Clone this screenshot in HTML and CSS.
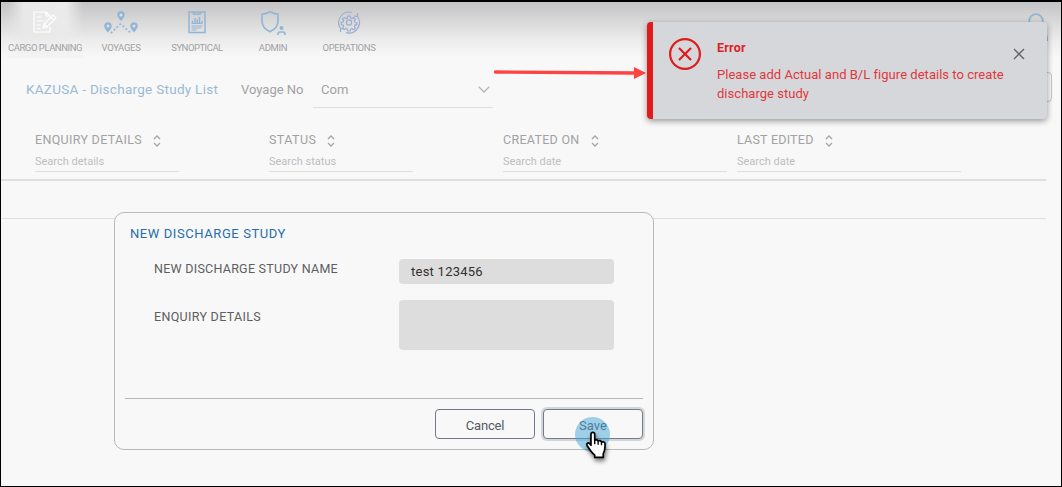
FILE: index.html
```html
<!DOCTYPE html>
<html lang="en">
<head>
<meta charset="utf-8">
<title>Discharge Study List</title>
<link rel="stylesheet" href="styles.css">
</head>
<body>
<div class="window">
  <header class="topbar">
    <nav class="nav">
      <a class="nav-item active">
        <svg class="nav-icon" width="26" height="24" viewBox="0 0 26 24"><path d="M18 8V5l-4-4H2v20h16v-5M14 1v4h4M4.500 6h5M4.500 10h7M4.500 14h4M4.500 17.500h4"/><path d="M11 17l1-4 9-9 3 3-9 9-4 1zM19 6l3 3M12 13l3 3"/></svg>
        <span class="nav-label t-cargo">CARGO PLANNING</span>
      </a>
      <a class="nav-item">
        <svg class="nav-icon voyages" width="36" height="24" viewBox="0 0 36 24"><path class="pin" d="M18 10C15 6.500 14.300 5 14.300 3.700a3.700 3.700 0 0 1 7.400 0C21.700 5 21 6.500 18 10zM5 21.500C2 18 1.300 16.500 1.300 15a3.700 3.700 0 0 1 7.400 0c0 1.500-.7 3-3.700 6.500zM31 21.500c-3-3.500-3.700-5-3.700-6.500a3.700 3.700 0 0 1 7.400 0c0 1.500-.7 3-3.700 6.500z"/><path class="dots" d="M8.500 21.500l9-8.500 10 8.500"/><circle class="hole" cx="18" cy="4" r="1.500"/><circle class="hole" cx="5" cy="15" r="1.500"/><circle class="hole" cx="31" cy="15" r="1.500"/></svg>
        <span class="nav-label t-voy">VOYAGES</span>
      </a>
      <a class="nav-item">
        <svg class="nav-icon" width="20" height="24" viewBox="0 0 20 24"><path class="frame" d="M2 1h16v20.500H2zM6.500 1v2h7V1"/><path class="bars" d="M5.500 12V9.500M8 12V7M10.200 12V8.500M12.500 12V6M15 12v-2"/><path d="M4.500 12.500h11M4.500 15h11M4.500 17h10M4.500 19h5"/></svg>
        <span class="nav-label t-syn">SYNOPTICAL</span>
      </a>
      <a class="nav-item">
        <svg class="nav-icon" width="26" height="24" viewBox="0 0 26 24"><path class="bold" d="M10 .8c3 1.600 5.500 2.200 8 2.400V10c0 5-3 8.300-8 10.700C5 18.300 2 15 2 10V3.200C4.500 3 7 2.400 10 .8z"/><circle class="pin" cx="21.500" cy="17" r="2"/><path class="bold" d="M18 24v-1a2 2 0 0 1 2-2h3a2 2 0 0 1 2 2v1"/></svg>
        <span class="nav-label t-adm">ADMIN</span>
      </a>
      <a class="nav-item">
        <svg class="nav-icon ops" width="24" height="24" viewBox="0 0 24 24"><circle cx="12" cy="11.500" r="2.600"/><path d="M10.800 5h2.400l.4 1.900 1.400.7 1.700-1 1.700 1.700-1 1.700.5 1.300 2 .4v2l-2 .4-.6 1.300 1.100 1.700-1.700 1.600-1.700-1-1.300.5-.5 1.800h-2.400l-.4-1.900-1.400-.6-1.700 1.100-1.700-1.700 1.100-1.600-.6-1.400-1.900-.4v-2.200l1.900-.4.6-1.300-1.100-1.700L7.300 6.600l1.700 1 1.300-.6z"/><path d="M3.500 17.500A10.500 10.500 0 0 1 15 1.500M20.500 5.500A10.500 10.500 0 0 1 9 21.600M17 5l3.500.5V2M7 18l-3.500-.5V21"/></svg>
        <span class="nav-label t-ops">OPERATIONS</span>
      </a>
    </nav>
    <svg class="user" width="24" height="28" viewBox="0 0 24 28"><circle cx="12" cy="8" r="6.800"/><path d="M2 28v-3a6 6 0 0 1 6-6h9a6 6 0 0 1 6 6v3"/></svg>
  </header>

  <section class="filters">
    <h1 class="page-title">KAZUSA - Discharge Study List</h1>
    <span class="field-label">Voyage No</span>
    <div class="select"><span class="select-value">Com</span><svg width="12" height="7" viewBox="0 0 12 7"><path d="M.8.800 6 6 11.200.8"/></svg></div>
    <span class="outline-button"></span>
  </section>

  <section class="table">
    <div class="thead">
      <div class="col"><div class="col-title"><span class="t-enq">ENQUIRY DETAILS</span><svg class="sort" width="8" height="12" viewBox="0 0 8 12"><path d="M1 4l3-3 3 3M1 8l3 3 3-3"/></svg></div><div class="search">Search details</div></div>
      <div class="col"><div class="col-title"><span class="t-sta">STATUS</span><svg class="sort" width="8" height="12" viewBox="0 0 8 12"><path d="M1 4l3-3 3 3M1 8l3 3 3-3"/></svg></div><div class="search">Search status</div></div>
      <div class="col"><div class="col-title"><span class="t-cre">CREATED ON</span><svg class="sort" width="8" height="12" viewBox="0 0 8 12"><path d="M1 4l3-3 3 3M1 8l3 3 3-3"/></svg></div><div class="search wide">Search date</div></div>
      <div class="col"><div class="col-title"><span class="t-las">LAST EDITED</span><svg class="sort" width="8" height="12" viewBox="0 0 8 12"><path d="M1 4l3-3 3 3M1 8l3 3 3-3"/></svg></div><div class="search wide">Search date</div></div>
    </div>
    <div class="empty-row"></div>
  </section>

  <div class="dialog">
    <h2 class="dialog-title">NEW DISCHARGE STUDY</h2>
    <div class="form">
      <label class="form-label t-name">NEW DISCHARGE STUDY NAME</label>
      <div class="input">test 123456</div>
      <label class="form-label t-det">ENQUIRY DETAILS</label>
      <div class="textarea"></div>
    </div>
    <div class="actions">
      <button class="btn t-can">Cancel</button>
      <button class="btn focused">Save</button>
    </div>
  </div>

  <svg class="arrow" width="158" height="14" viewBox="0 0 158 14"><path class="shaft" d="M3.500 6 143 7"/><path class="head" d="M142 1l12 6-12 6z"/></svg>

  <aside class="toast">
    <svg class="toast-icon" width="32" height="32" viewBox="0 0 32 32"><circle cx="16" cy="16" r="14.900"/><path d="M10 10l12 12M22 10L10 22"/></svg>
    <div class="toast-body">
      <div class="toast-title">Error</div>
      <div class="toast-text">Please add Actual and B/L figure details to create<br>discharge study</div>
    </div>
    <svg class="close" width="12" height="12" viewBox="0 0 12 12"><path d="M1 1l10 10M11 1L1 11"/></svg>
  </aside>

  <div class="click-spot"></div>
  <svg class="hand" width="27" height="33" viewBox="0 0 30 36"><path d="M5.500 3.500c0-3 4-3 4.200 0V10c1-1 3.300-.8 3.800.8 1.400-1 3.300-.5 3.700 1.200 1.800-.8 4 0 4 2.400 0 4.500-.2 7.600-2 10.400V29h-9.500v-2.500C6.500 24 4.500 21 1.200 15.700 0 13 2.800 12 4 13.600l1.500 2z"/><path class="lines" d="M9.700 10v4.500M13.500 11v4M17.200 12v3.500"/></svg>
</div>
</body>
</html>
```
FILE: styles.css
```css
* { box-sizing: border-box; }
body { margin: 0; font-family: Roboto, "Open Sans", sans-serif; font-size: 13px; color: #a2a2a4; }
h1, h2 { margin: 0; font-weight: 400; }
svg { display: block; fill: none; }
.window { position: relative; width: 1062px; height: 487px; overflow: hidden; background: #f8f8f8; border: 1px solid #000; border-top-width: 2px; }

/* Top navigation */
.topbar { display: flex; justify-content: space-between; height: 56px; padding: 0 13px 0 6px; background: linear-gradient(#c3c3c5, #d9d9da 35%, #ededed 70%, #f8f8f8); }
.nav { display: flex; }
.nav-item { display: flex; flex-direction: column; align-items: center; width: 76px; padding-top: 9px; }
.nav-item.active { background: linear-gradient(transparent 60%, #f4f4f4), linear-gradient(90deg, transparent 0, #e8e8e8 22%, #eaeaea 78%, transparent); }
.nav-icon { height: 24px; stroke: #91b5d4; stroke-width: 1.200; }
.active .nav-icon { stroke: #fff; stroke-width: 1.200; }
.nav-icon .pin { fill: #91b5d4; stroke: none; }
.nav-icon .hole { fill: #e0e0e0; stroke: none; }
.nav-icon .dots { stroke-width: 2; stroke-linecap: round; stroke-dasharray: .1 3.900; }
.nav-icon .bars { stroke-width: 1.500; }
.nav-icon .frame { stroke-width: 1.500; }
.nav-icon .bold { stroke-width: 1.600; }
.nav-icon.ops { stroke: #9aaed0; }
.nav-label { margin-top: 7px; font-size: 9.500px; line-height: 12px; white-space: nowrap; }
.t-cargo { letter-spacing: -.46px; }
.t-voy { letter-spacing: -.33px; }
.t-syn { letter-spacing: -.49px; }
.t-adm, .t-ops { letter-spacing: -.36px; }
.user { margin-top: 11px; stroke: #91b5d4; stroke-width: 1.800; }

/* Filter row */
.filters { display: flex; align-items: center; height: 50px; padding: 9px 9px 0 25px; }
.page-title { width: 214px; margin-top: 3px; font-size: 13.500px; letter-spacing: .28px; color: #9abad4; white-space: nowrap; }
.field-label { width: 73px; margin-top: 3px; padding-left: 1px; white-space: nowrap; }
.select { display: flex; align-items: center; justify-content: space-between; width: 180px; height: 36px; margin-top: 4px; padding: 0 3px 0 8px; border-bottom: 1px solid #dedede; }
.select svg { stroke: #b6b6b8; stroke-width: 1.300; }
.outline-button { width: 60px; height: 30px; margin: -2px 0 0 auto; border: 1px solid #c5c5c5; border-radius: 4px; }

/* Study table */
.table { width: 1045px; }
.thead { display: grid; grid-template-columns: 234px 234px 234px 1fr; height: 73px; padding: 22px 0 0 34px; border-bottom: 2px solid #dfdfdf; }
.col-title { display: flex; align-items: center; gap: 11px; height: 18px; font-size: 12.500px; }
.t-enq { letter-spacing: .31px; }
.t-sta { letter-spacing: .45px; }
.t-cre { letter-spacing: .28px; }
.t-las { letter-spacing: .23px; }
.sort { margin-top: 3px; stroke: #a5a5a5; stroke-width: 1.300; }
.search { width: 144px; height: 24px; padding-top: 6px; border-bottom: 1px solid #dedede; font-size: 11px; line-height: 16px; color: #bdbdbf; }
.search.wide { width: 224px; }
.empty-row { height: 38px; border-bottom: 1px solid #dfdfdf; }

/* New study dialog */
.dialog { position: absolute; left: 113px; top: 210px; width: 540px; height: 238px; padding: 12px 10px 10px; background: #f8f8f8; border: 1px solid #b9b9bb; border-radius: 10px; }
.dialog-title { padding-left: 5px; font-size: 13px; line-height: 18px; letter-spacing: .58px; color: #276ea8; }
.form { display: grid; grid-template-columns: 245px 215px; row-gap: 16px; height: 156px; padding: 16px 0 0 29px; align-content: start; border-bottom: 1px solid #b9b9bb; }
.form-label { line-height: 20px; font-size: 12.500px; color: #5e5e60; }
.t-name { letter-spacing: .26px; }
.t-det { padding-top: 7px; letter-spacing: .31px; }
.input { height: 25px; padding-left: 12px; line-height: 25px; letter-spacing: .25px; background: #ddd; border-radius: 4px; color: #303030; }
.textarea { height: 50px; background: #ddd; border-radius: 4px; }
.actions { display: flex; justify-content: flex-end; gap: 8px; padding-top: 10px; }
.btn { width: 100px; height: 30px; padding: 2px 0 0; font: 13px Roboto, sans-serif; color: #555a63; background: #f8f8f8; border: 1px solid #727b87; border-radius: 4px; }
.t-can { letter-spacing: -.2px; }
.focused { box-shadow: 0 0 0 2px #d4d6d8; }

/* Callout arrow */
.arrow { position: absolute; left: 491px; top: 64px; stroke: #ff4343; }
.arrow .shaft { stroke-linecap: round; stroke-width: 3.400; }
.arrow .head { fill: #ff4343; stroke: none; }

/* Error toast */
.toast { position: absolute; left: 646px; top: 20px; width: 400px; height: 97px; display: flex; padding: 16px 22px 0 16px; background: #d6d7db; border-left: 6px solid #e01b1b; border-radius: 4px; box-shadow: 0 2px 6px rgba(0,0,0,.4); color: #e0383b; }
.toast-icon { stroke: #e01b1b; stroke-width: 2.200; }
.toast-body { flex: 1; padding-left: 16px; white-space: nowrap; }
.toast-title { font-size: 12.500px; font-weight: 700; line-height: 19px; letter-spacing: .25px; color: #df2023; }
.toast-text { margin-top: 8px; line-height: 19px; letter-spacing: .03px; }
.close { margin-top: 10px; stroke: #626466; stroke-width: 1.400; }

/* Mouse pointer */
.click-spot { position: absolute; left: 574px; top: 415px; width: 35px; height: 35px; border-radius: 50%; background: rgba(63,163,215,.48); }
.hand { position: absolute; left: 585px; top: 429px; overflow: visible; fill: #fff; stroke: #000; stroke-width: 1.900; stroke-linejoin: round; filter: drop-shadow(1px 3px 2px rgba(0,0,0,.5)); }
.hand .lines { fill: none; stroke-width: 1.500; }
```
